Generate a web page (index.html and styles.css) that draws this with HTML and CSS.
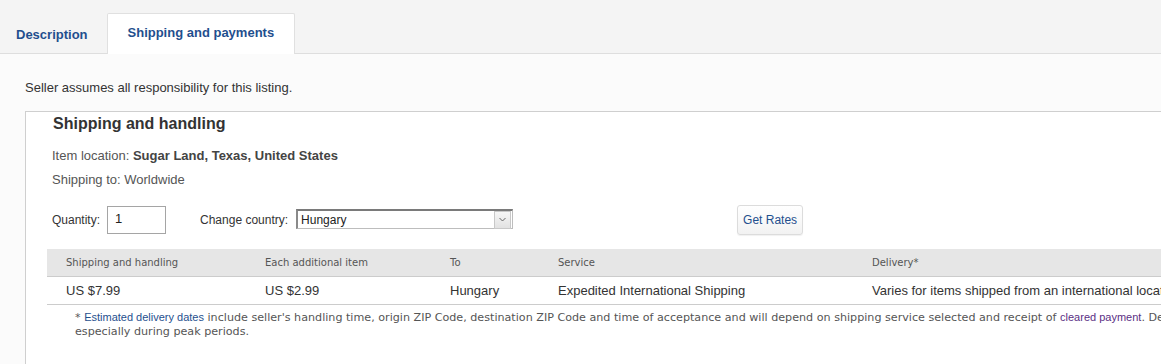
FILE: index.html
```html
<!DOCTYPE html>
<html lang="en">
<head>
  <meta charset="UTF-8">
  <title>Shipping and payments</title>
  <link rel="stylesheet" href="styles.css">
</head>
<body>
  <!-- Tabs -->
  <div class="tabs">
    <a class="tab">Description</a>
    <a class="tab active">Shipping and payments</a>
  </div>

  <div class="content">
    <p class="seller-note">Seller assumes all responsibility for this listing.</p>

    <div class="ship-box">
      <h2 class="ship-title">Shipping and handling</h2>
      <div class="info-line first">Item location: <b>Sugar Land, Texas, United States</b></div>
      <div class="info-line">Shipping to: Worldwide</div>

      <div class="controls">
        <label class="ctl-label">Quantity:</label>
        <div class="qty-input">1</div>
        <label class="ctl-label country-label">Change country:</label>
        <div class="country-select">
          <span class="select-text">Hungary</span>
          <span class="select-arrow">
            <svg width="7" height="5" viewBox="0 0 7 5"><path d="M0.5 1 L3.5 4 L6.5 1" fill="none" stroke="#666" stroke-width="1"/></svg>
          </span>
        </div>
        <button class="rates-btn">Get Rates</button>
      </div>

      <!-- Rates table -->
      <div class="rates">
        <div class="rates-row rates-head">
          <div>Shipping and handling</div>
          <div>Each additional item</div>
          <div>To</div>
          <div>Service</div>
          <div>Delivery*</div>
        </div>
        <div class="rates-row rates-body">
          <div>US $7.99</div>
          <div>US $2.99</div>
          <div>Hungary</div>
          <div>Expedited International Shipping</div>
          <div>Varies for items shipped from an international location</div>
        </div>
      </div>

      <p class="footnote">* <a class="link">Estimated delivery dates</a> include seller's handling time, origin ZIP Code, destination ZIP Code and time of acceptance and will depend on shipping service selected and receipt of <a class="link visited">cleared payment</a>. Delivery times may vary,<br>especially during peak periods.</p>
    </div>
  </div>
</body>
</html>
```

FILE: styles.css
```css
html, body {
  margin: 0;
  padding: 0;
  overflow: hidden;
}

body {
  font-family: "Liberation Sans", Arial, sans-serif;
  color: #333;
  background: #fbfbfb;
  width: 1161px;
  height: 364px;
}

/* Tabs */
.tabs {
  display: flex;
  align-items: flex-end;
  height: 53px;
  background: #f4f4f4;
  border-bottom: 1px solid #dedede;
}

.tab {
  display: block;
  height: 38px;
  line-height: 38px;
  padding: 0 18px 0 15px;
  font-size: 13px;
  font-weight: bold;
  color: #1f4f8e;
  margin-bottom: -1px;
  border: 1px solid transparent;
  border-bottom: none;
}

.tab.active {
  background: #fff;
  height: 40px;
  line-height: 38px;
  padding: 0 20px 0 20px;
  border-color: #e0e0e0;
  border-radius: 2px 2px 0 0;
}

/* Content */
.content {
  width: 1500px;
}

.seller-note {
  margin: 0;
  padding: 26px 0 0 25px;
  height: 31px;
  line-height: 16px;
  font-size: 13px;
  color: #333;
}

.ship-box {
  margin-left: 25px;
  width: 1400px;
  height: 260px;
  background: #fff;
  border: 1px solid #cfcfcf;
  padding: 0 0 0 21px;
}

.ship-title {
  margin: 0;
  padding: 1px 0 0 6px;
  font-size: 16px;
  line-height: 22px;
  font-weight: bold;
  color: #333;
}

.info-line {
  padding-left: 5px;
  font-size: 13px;
  line-height: 24px;
  color: #555;
}

.info-line.first {
  margin-top: 9px;
}

.info-line b {
  color: #444;
}

.controls {
  display: flex;
  align-items: center;
  margin-top: 13px;
  padding-left: 5px;
  height: 30px;
}

.ctl-label {
  font-size: 12px;
  color: #333;
  margin-right: 7px;
}

.qty-input {
  width: 50px;
  height: 26px;
  line-height: 24px;
  padding-left: 7px;
  border: 1px solid #a5a5a5;
  font-size: 13px;
  color: #222;
}

.country-label {
  margin-left: 34px;
  margin-right: 8px;
}

.country-select {
  display: flex;
  align-items: center;
  width: 214px;
  height: 17px;
  border: 1px solid #bdbdbd;
  border-top: 2px solid #7a7a7a;
  border-left: 2px solid #8a8a8a;
  background: #fff;
  margin-top: -2px;
}

.select-text {
  flex: 1;
  font-size: 12px;
  padding-left: 3px;
  color: #222;
}

.select-arrow {
  display: flex;
  align-items: center;
  justify-content: center;
  width: 15px;
  height: 16px;
  margin-right: 1px;
  border: 1px solid #c8c8c8;
  background: linear-gradient(#f6f6f6, #e2e2e2);
}

.rates-btn {
  margin-left: 224px;
  width: 66px;
  height: 30px;
  border: 1px solid #dcdcdc;
  border-radius: 3px;
  background: linear-gradient(#ffffff, #f2f2f2);
  box-shadow: 0 1px 1px rgba(0, 0, 0, 0.06);
  font-family: "Liberation Sans", Arial, sans-serif;
  font-size: 12px;
  color: #1f4f8e;
  padding: 0;
}

/* Rates table */
.rates {
  margin-top: 14px;
}

.rates-row {
  display: grid;
  grid-template-columns: 199px 185px 108px 314px 1fr;
  padding-left: 19px;
  align-items: center;
  border-bottom: 1px solid #cccccc;
}

.rates-head {
  height: 27px;
  background: #e6e6e6;
  font-family: "DejaVu Sans", Verdana, sans-serif;
  font-size: 10px;
  color: #555;
}

.rates-body {
  height: 27px;
  font-size: 13px;
  color: #333;
  white-space: nowrap;
}

.footnote {
  margin: 5px 0 0 28px;
  font-family: "DejaVu Sans", Verdana, sans-serif;
  font-size: 11.15px;
  line-height: 14px;
  color: #555;
  white-space: nowrap;
}

.link {
  font-family: "Liberation Sans", Arial, sans-serif;
  font-size: 11px;
  color: #1f4f8e;
}

.link.visited {
  color: #5b2f84;
}
```
